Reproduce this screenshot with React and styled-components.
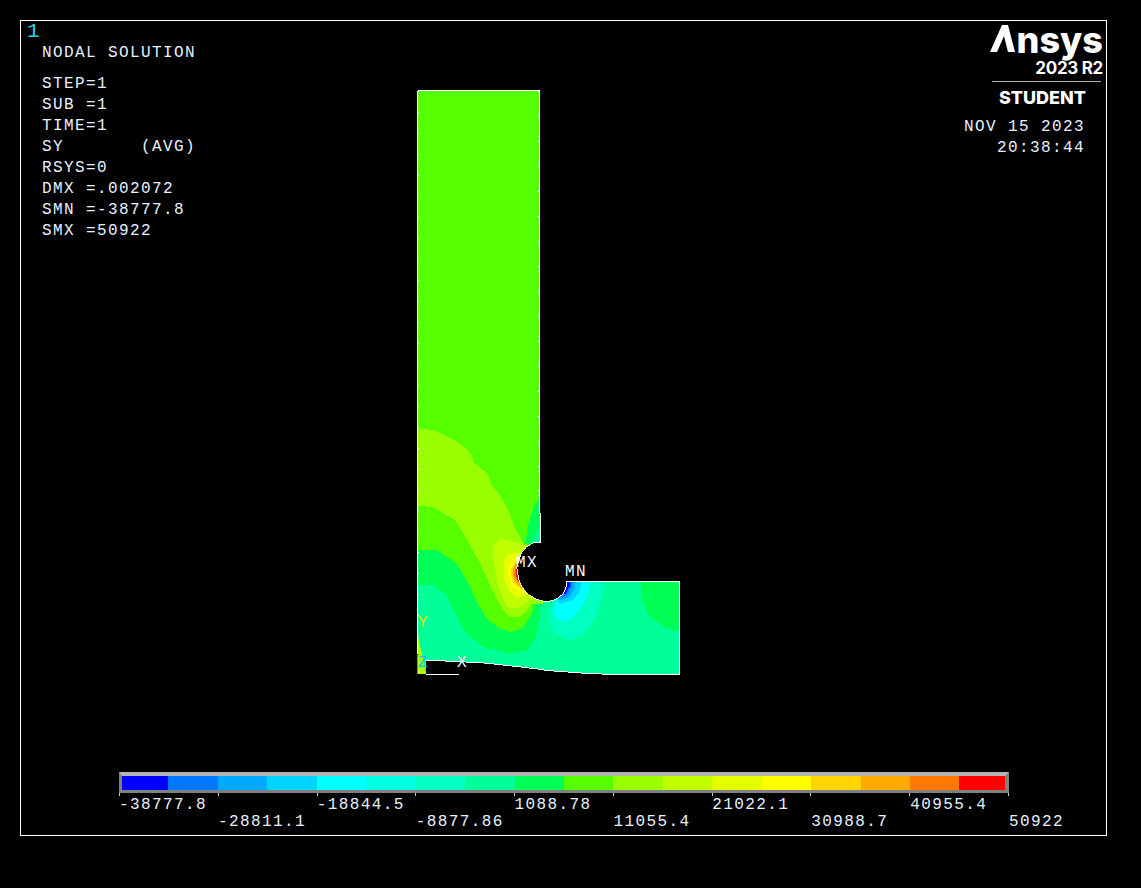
import React from "react";
import styled, { createGlobalStyle } from "styled-components";

const Global = createGlobalStyle`
  html, body { margin: 0; padding: 0; background: #000; }
  body { width: 1141px; height: 888px; overflow: hidden; }
`;

const Screen = styled.main`
  width: 1141px;
  height: 888px;
  padding: 20px;
  box-sizing: border-box;
  background: #000;
`;

const Frame = styled.section`
  position: relative;
  width: 1087px;
  height: 816px;
  box-sizing: border-box;
  border: 1px solid #fff;
  display: flex;
  flex-direction: column;
  font-family: "Liberation Mono", monospace;
  font-size: 16px;
  letter-spacing: 1.4px;
  color: #e6f2ff;
`;

const TopRow = styled.header`
  position: relative;
  display: flex;
  justify-content: space-between;
  align-items: flex-start;
  height: 240px;
`;

const Notes = styled.div`
  padding-left: 21px;
`;

const WindowNumber = styled.div`
  margin-left: -15px;
  height: 22px;
  font-size: 21px;
  line-height: 21px;
  letter-spacing: 0;
  font-weight: 400;
  color: #20d8e8;
`;

const Heading = styled.div`
  line-height: 21px;
  white-space: pre;
  margin-bottom: 10px;
`;

const NoteLine = styled.div`
  line-height: 21px;
  white-space: pre;
`;

const Side = styled.div`
  display: flex;
  flex-direction: column;
  align-items: flex-end;
  padding: 2px 3px 0 0;
`;

const Wordmark = styled.div`
  display: flex;
  align-items: baseline;
  height: 35px;
  font-family: Inter, sans-serif;
  font-weight: 800;
  font-size: 36px;
  line-height: 35px;
  letter-spacing: 0;
  color: #fff;
`;

const MarkLetter = styled.span`
  position: relative;
  display: inline-block;
  width: 27px;
  height: 35px;
  color: transparent;
  overflow: visible;
  svg {
    position: absolute;
    left: 0;
    top: 2px;
  }
`;

const Release = styled.div`
  font-family: Inter, sans-serif;
  font-weight: 700;
  font-size: 17px;
  line-height: 20px;
  letter-spacing: -0.3px;
  color: #fff;
`;

const Rule = styled.div`
  width: 109px;
  height: 1px;
  margin: 3px 2px 5px 0;
  background: #b0b0b0;
`;

const Edition = styled.div`
  margin-right: 17px;
  font-family: Inter, sans-serif;
  font-weight: 800;
  font-size: 18px;
  line-height: 22px;
  letter-spacing: 0;
  color: #fff;
`;

const Stamp = styled.div`
  margin: 8px 18px 0 0;
  text-align: right;
  line-height: 21px;
  white-space: pre;
`;

const Plot = styled.div`
  position: absolute;
  inset: 0;
`;

const PlotSvg = styled.svg`
  display: block;
  width: 1085px;
  height: 814px;
`;

const PlotLabel = styled.span`
  position: absolute;
  left: ${(p) => p.$x - 21}px;
  top: ${(p) => p.$y - 36}px;
  line-height: 21px;
  color: ${(p) => p.$color || "#f4f8ff"};
`;

const Legend = styled.div`
  position: relative;
  margin: auto 0 0 98px;
  width: 890px;
  padding-bottom: 5px;
`;

const Bar = styled.div`
  display: flex;
  height: 14px;
  border-style: solid;
  border-width: 4px 4px 3px 3px;
  border-color: #b4b4b4 #808080 #808080 #808080;
`;

const Swatch = styled.div`
  flex: 0 0 49.44px;
  background: ${(p) => p.$color};
  &:first-child {
    flex-basis: 46.44px;
  }
  &:last-child {
    flex-basis: 45.5px;
  }
`;

const Ticks = styled.div`
  display: flex;
  height: 3px;
`;

const Tick = styled.div`
  flex: 1;
  border-left: 1px solid #c8c8c8;
  &:last-child {
    border-right: 1px solid #c8c8c8;
  }
`;

const Labels = styled.div`
  display: grid;
  grid-template-columns: repeat(10, 98.9px);
  grid-template-rows: 17px 17px;
`;

const LabelText = styled.div`
  grid-column: ${(p) => p.$col};
  grid-row: ${(p) => p.$row};
  line-height: 17px;
  min-width: 0;
  white-space: nowrap;
  margin-top: 1px;
`;

const colors = [
  "#0000ff", "#0078ff", "#00aaff", "#00d4ff", "#00ffff", "#00ffe0",
  "#00ffc0", "#00ff99", "#00ff55", "#55ff00", "#99ff00", "#c0ff00",
  "#e6ff00", "#ffff00", "#ffd400", "#ffaa00", "#ff7800", "#ff0000",
];

const legendValues = [
  "-38777.8", "-28811.1", "-18844.5", "-8877.86", "1088.78",
  "11055.4", "21022.1", "30988.7", "40955.4", "50922",
];

const notes = [
  "STEP=1", "SUB =1", "TIME=1", "SY       (AVG)", "RSYS=0",
  "DMX =.002072", "SMN =-38777.8", "SMX =50922",
];

const arc =
  "422,185 400,187 380,198 365,215 355,240 350,262 355,295 365,320 385,342 410,357 440,364 465,358 487,342 497,322 500,303";

const shape = `52,-1170 418,-1170 418,100 422,100 ${arc} 838,303 838,582 635,582 550,578 510,575 440,570 410,565 330,556 260,548 210,545 150,543 120,540 78,541 78,582 52,582`;

const edge = `52,520 52,-1170 418,-1170 418,100 422,100 ${arc} 838,303 838,582 635,582 550,578 510,575 440,570 410,565 330,556 260,548 210,545 150,543 120,540 78,541`;

const bands = [
  ["#00ff55", "0,-1300 430,-1300 430,0 425,360 420,380 408,470 380,510 330,520 250,500 200,460 175,420 140,345 100,315 52,312 0,312"],
  ["#55ff00", "0,-1300 430,-1300 430,355 405,355 395,400 370,440 335,455 300,445 260,415 230,365 205,310 170,250 110,208 52,207 0,207"],
  ["#99ff00", "0,-156 52,-156 95,-152 130,-138 165,-120 195,-98 215,-75 220,-55 262,-20 275,15 300,45 325,90 345,145 360,170 375,200 430,370 395,370 378,395 355,410 325,408 300,375 275,325 240,250 200,175 165,120 100,80 52,75 0,75"],
  ["#00ff55", "430,40 418,52 400,80 385,130 375,190 430,190"],
  ["#00ff99", "430,138 418,140 405,160 395,187 430,187"],
  ["#00ff55", "720,290 720,303 725,360 750,410 800,445 838,452 860,452 860,290"],
  ["#00ffc0", "612,290 612,303 608,350 585,410 555,460 510,480 460,455 443,420 445,385 470,355 500,290"],
  ["#00ffff", "570,290 565,340 540,385 500,425 470,415 458,390 470,365 500,290"],
  ["#00d4ff", "545,290 540,330 520,358 480,370 470,360 500,290"],
  ["#00aaff", "528,290 524,325 507,350 480,360 470,350 500,290"],
  ["#0078ff", "518,290 514,322 500,345 485,352 480,340 500,290"],
  ["#0000ff", "510,290 508,318 495,342 480,330 500,290"],
  ["#c0ff00", "300,175 278,200 283,260 295,320 320,378 350,385 385,365 400,350 420,300 400,200 325,180"],
  ["#e6ff00", "340,218 320,222 310,245 310,285 325,330 350,352 375,345 400,330 400,220"],
  ["#ffff00", "345,232 328,250 325,285 335,315 355,330 375,335 400,300 400,230"],
  ["#ffd400", "345,245 333,265 332,285 342,310 365,328 400,300 400,240"],
  ["#ffaa00", "348,250 340,262 338,285 346,305 365,322 400,300 400,240"],
  ["#ff7800", "348,255 343,268 342,285 350,302 365,315 400,300 400,240"],
  ["#ff0000", "349,258 346,270 347,285 353,300 365,312 400,300 400,240"],
  ["#a8ff00", "52,460 65,520 78,582 52,582"],
  ["#e0ff00", "52,550 58,582 52,582"],
];

export default function App() {
  return (
    <Screen>
      <Global />
      <Frame>
        <Plot>
          <PlotSvg viewBox="21 21 1085 814" shapeRendering="crispEdges">
            <defs>
              <clipPath id="body">
                <polygon points={shape} />
              </clipPath>
            </defs>
            <g transform="translate(400.2 480.5) scale(0.33333)">
              <g clipPath="url(#body)">
                <polygon points={shape} fill="#00ff99" />
                {bands.map(([fill, points], i) => (
                  <polygon key={i} points={points} fill={fill} />
                ))}
              </g>
              <polyline points={edge} fill="none" stroke="#fff" strokeWidth="3" />
              <line x1="52" y1="525" x2="52" y2="582" stroke="#00aaff" strokeWidth="3" />
              <line x1="78" y1="582" x2="175" y2="582" stroke="#fff" strokeWidth="3" />
              <line x1="635" y1="582" x2="838" y2="582" stroke="#fff" strokeWidth="3" />
              <line x1="55" y1="-1170" x2="55" y2="520" stroke="#fff" strokeWidth="3" strokeDasharray="3 60" />
              <line x1="415" y1="-1170" x2="415" y2="100" stroke="#fff" strokeWidth="3" strokeDasharray="3 72" />
            </g>
          </PlotSvg>
          <PlotLabel $x={516} $y={568}>MX</PlotLabel>
          <PlotLabel $x={565} $y={577}>MN</PlotLabel>
          <PlotLabel $x={418} $y={628} $color="#e0e000">Y</PlotLabel>
          <PlotLabel $x={418} $y={668} $color="#10c0f0">Z</PlotLabel>
          <PlotLabel $x={457} $y={668}>X</PlotLabel>
        </Plot>
        <TopRow>
          <Notes>
            <WindowNumber>1</WindowNumber>
            <Heading>NODAL SOLUTION</Heading>
            {notes.map((n) => (
              <NoteLine key={n}>{n}</NoteLine>
            ))}
          </Notes>
          <Side>
            <Wordmark>
              <MarkLetter>
                A
                <svg width="26" height="27" viewBox="0 0 26 27">
                  <polygon points="0,27 12,0 18,0 25,27 18,27 14,11 7,27" fill="#fff" />
                </svg>
              </MarkLetter>
              nsys
            </Wordmark>
            <Release>2023 R2</Release>
            <Rule />
            <Edition>STUDENT</Edition>
            <Stamp>{"NOV 15 2023\n20:38:44"}</Stamp>
          </Side>
        </TopRow>
        <Legend>
          <Bar>
            {colors.map((c) => (
              <Swatch key={c} $color={c} />
            ))}
          </Bar>
          <Ticks>
            {Array.from({ length: 9 }, (_, i) => (
              <Tick key={i} />
            ))}
          </Ticks>
          <Labels>
            {legendValues.map((v, i) => (
              <LabelText key={v} $col={i + 1} $row={i % 2 === 0 ? 1 : 2}>
                {v}
              </LabelText>
            ))}
          </Labels>
        </Legend>
      </Frame>
    </Screen>
  );
}
